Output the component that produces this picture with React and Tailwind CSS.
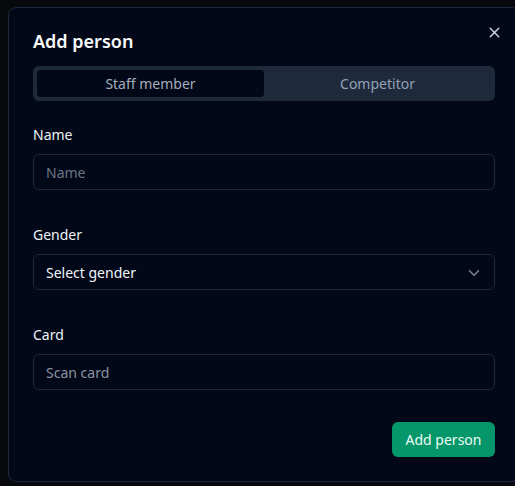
import React, { useState } from 'react';
import { X, ChevronDown } from 'lucide-react';

const fieldLabel = "block h-5 pt-px text-sm leading-5 text-[#eef2f7]";

const AddPersonDialog = () => {
  const [tab, setTab] = useState('staff');
  const [name, setName] = useState('');
  const [card, setCard] = useState('');

  return (
    <div className="relative ml-2 mt-[7px] w-[512px] rounded-lg border border-[#1e293b] bg-[#020817] p-6">
      <button className="absolute right-[16px] top-[16px] text-[#cbd5e1]">
        <X size={17} strokeWidth={2} />
      </button>

      <h2 className="text-lg font-semibold leading-none text-[#f8fafc]">Add person</h2>

      {/* tabs */}
      <div className="mt-4 grid h-[35px] grid-cols-2 rounded-md bg-[#1e293b] p-1">
        <button
          onClick={() => setTab('staff')}
          className={`rounded-[4px] text-sm ${tab === 'staff' ? 'bg-[#020817] text-[#a3aebf]' : 'text-[#94a3b8]'}`}
        >
          Staff member
        </button>
        <button
          onClick={() => setTab('competitor')}
          className={`rounded-[4px] text-sm ${tab === 'competitor' ? 'bg-[#020817] text-[#a3aebf]' : 'text-[#94a3b8]'}`}
        >
          Competitor
        </button>
      </div>

      {/* name */}
      <div className="mt-[23px]">
        <label className={fieldLabel}>Name</label>
        <input
          value={name}
          onChange={e => setName(e.target.value)}
          placeholder="Name"
          className="mt-[10px] h-9 w-full rounded-md border border-[#1e293b] bg-[#020817] px-3 pt-px text-sm text-[#f1f5f9] placeholder:text-[#6b7688] outline-none"
        />
      </div>

      {/* gender */}
      <div className="mt-[34px]">
        <label className={fieldLabel}>Gender</label>
        <button className="mt-[10px] flex h-9 w-full items-center justify-between rounded-md border border-[#1e293b] bg-[#020817] pl-3 pr-[11px] pt-px text-sm text-[#f1f5f9]">
          <span>Select gender</span>
          <ChevronDown size={18} className="text-[#7c8594]" />
        </button>
      </div>

      {/* card */}
      <div className="mt-[34px]">
        <label className={fieldLabel}>Card</label>
        <input
          value={card}
          onChange={e => setCard(e.target.value)}
          placeholder="Scan card"
          className="mt-[10px] h-9 w-full rounded-md border border-[#1e293b] bg-[#020817] px-3 pt-px text-sm text-[#f1f5f9] placeholder:text-[#8a93a2] outline-none"
        />
      </div>

      <div className="mt-8 flex justify-end">
        <button className="h-[35px] w-[103px] rounded-md bg-[#059669] pt-px text-sm text-[#ecfdf5]">Add person</button>
      </div>
    </div>
  );
};

export default function App() {
  return (
    <div
      className="h-[486px] w-[515px] overflow-hidden bg-[#08090d]"
      style={{ fontFamily: '"Noto Sans", "Open Sans", sans-serif' }}
    >
      <AddPersonDialog />
    </div>
  );
}
